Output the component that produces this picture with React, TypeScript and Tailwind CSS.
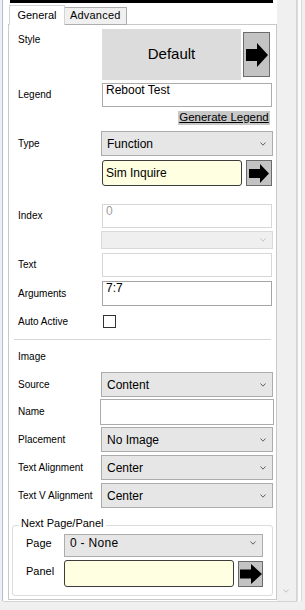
import React from "react";

function Arrow({ w, h, shaft, head }: { w: number; h: number; shaft: number; head: number }) {
  const t = (h - shaft) / 2;
  return (
    <svg width={w} height={h} viewBox={`0 0 ${w} ${h}`} className="block">
      <polygon
        points={`0,${t} ${head},${t} ${head},0 ${w},${h / 2} ${head},${h} ${head},${h - t} 0,${h - t}`}
        fill="#000"
      />
    </svg>
  );
}

function Chevron({ color = "#5f5f5f" }: { color?: string }) {
  return (
    <svg width="6" height="4" viewBox="0 0 6 4" className="block">
      <path d="M0.5 0.5 L3 3.2 L5.5 0.5" fill="none" stroke={color} strokeWidth="1" />
    </svg>
  );
}

function Label({ children, className = "" }: { children: React.ReactNode; className?: string }) {
  return <div className={"shrink-0 text-[10px] leading-[12px] text-black " + className}>{children}</div>;
}

function Dropdown({ text, className = "" }: { text: string; className?: string }) {
  return (
    <div
      className={
        "flex items-center justify-between border border-[#acacac] bg-[#e6e6e6] pl-[5px] pr-[6px] text-[12px] leading-[14px] text-black " +
        className
      }
    >
      <span>{text}</span>
      <Chevron />
    </div>
  );
}

export default function App() {
  return (
    <div className="flex h-[610px] w-[305px] bg-[#f0f0f0] font-['Liberation_Sans',Arial,sans-serif]">
      <div className="w-[2px] shrink-0" />
      <div className="h-[601px] w-[1px] shrink-0 bg-[#a9c0dc]" />
      <div className="flex h-[602px] w-[294px] shrink-0 flex-col border-b border-[#d4d4d4]">
        <div className="flex flex-1">
          {/* white client area */}
          <div className="flex w-[274px] shrink-0 flex-col bg-white pl-[5px]">
            <div className="ml-[2px] h-[3px] w-[263px] bg-black" />
            <div className="h-[2px]" />
            {/* tab strip */}
            <div className="flex h-[20px] items-end">
              <div className="h-[1px] w-[1px] bg-[#c9c9c9]" />
              <div className="flex h-[20px] w-[56px] items-start justify-center border-l border-r border-t border-[#d4d4d4] bg-white pt-[3px] text-[11px] leading-[13px] text-black">
                General
              </div>
              <div className="h-[18px] w-[62px] border-b border-r border-t border-[#adadad] bg-[#f0f0f0] pl-[5px] pt-[1px] text-[11px] leading-[13px] tracking-[0.2px] text-black">
                Advanced
              </div>
              <div className="h-[1px] flex-1 bg-[#c9c9c9]" />
            </div>
            {/* tab page */}
            <div className="flex h-[575px] w-[269px] flex-col border-b border-l border-r border-[#c9c9c9] pl-[9px]">
              {/* Style */}
              <div className="mt-[4px] flex h-[51px]">
                <Label className="w-[84px] pt-[5px]">Style</Label>
                <div className="flex h-[51px] w-[139px] items-center justify-center bg-[#dcdcdc] text-[15px] text-black">
                  Default
                </div>
                <div className="ml-[2px] flex h-[45px] w-[27px] items-center justify-center self-center border border-[#6b6b6b] bg-[#c3c3c3]">
                  <Arrow w={22} h={24} shaft={12} head={11} />
                </div>
              </div>
              {/* Legend */}
              <div className="mt-[3px] flex h-[24px] items-center">
                <Label className="w-[84px]">Legend</Label>
                <div className="h-[24px] w-[170px] border border-[#ababab] bg-white pl-[3px] text-[12px] leading-[13px] text-black">
                  Reboot Test
                </div>
              </div>
              {/* Generate legend */}
              <div className="mt-[4px] flex h-[14px]">
                <div className="ml-[160px] w-[92px] bg-[#c8c8c8] text-center text-[11.5px] leading-[13px] text-black underline">
                  Generate Legend
                </div>
              </div>
              {/* Type */}
              <div className="mt-[6px] flex h-[25px] items-center">
                <Label className="w-[83px]">Type</Label>
                <Dropdown text="Function" className="h-[25px] w-[172px]" />
              </div>
              {/* Sim Inquire */}
              <div className="mt-[4px] flex h-[26px]">
                <div className="w-[84px] shrink-0" />
                <div className="flex h-[26px] w-[140px] items-center rounded-[3px] border border-[#3c3c3c] bg-[#ffffe1] pl-[3px] text-[12px] leading-[14px] text-black">
                  Sim Inquire
                </div>
                <div className="ml-[4px] flex h-[26px] w-[26px] items-center justify-center border border-[#6b6b6b] bg-[#c3c3c3]">
                  <Arrow w={20} h={19} shaft={9} head={11} />
                </div>
              </div>
              {/* Index */}
              <div className="mt-[18px] flex h-[24px] items-center">
                <Label className="w-[84px]">Index</Label>
                <div className="h-[24px] w-[170px] border border-[#d6d6d6] bg-white pl-[3px] text-[12px] leading-[13px] text-[#a0a0a0]">
                  0
                </div>
              </div>
              {/* disabled dropdown */}
              <div className="mt-[3px] flex h-[18px]">
                <div className="w-[83px] shrink-0" />
                <div className="flex h-[18px] w-[172px] items-center justify-end border border-[#d9d9d9] bg-[#efefef] pr-[6px]">
                  <Chevron color="#c4c4c4" />
                </div>
              </div>
              {/* Text */}
              <div className="mt-[4px] flex h-[24px] items-center">
                <Label className="w-[84px]">Text</Label>
                <div className="h-[24px] w-[170px] border border-[#d6d6d6] bg-white" />
              </div>
              {/* Arguments */}
              <div className="mt-[4px] flex h-[25px] items-center">
                <Label className="w-[84px]">Arguments</Label>
                <div className="h-[25px] w-[170px] border border-[#a5a5a5] bg-white pl-[3px] text-[12px] leading-[13px] text-black">
                  7:7
                </div>
              </div>
              {/* Auto Active */}
              <div className="mt-[9px] flex h-[13px] items-center">
                <Label className="w-[85px]">Auto Active</Label>
                <div className="h-[13px] w-[13px] border border-[#333333] bg-white" />
              </div>
              {/* separator */}
              <div className="-ml-[4px] mt-[11px] h-[1px] w-[257px] bg-[#d6d6d6]" />
              {/* Image */}
              <div className="mt-[11px] flex h-[12px]">
                <Label>Image</Label>
              </div>
              {/* Source */}
              <div className="mt-[9px] flex h-[25px] items-center">
                <Label className="w-[83px]">Source</Label>
                <Dropdown text="Content" className="h-[25px] w-[172px]" />
              </div>
              {/* Name */}
              <div className="mt-[2px] flex h-[26px] items-center">
                <Label className="w-[82px]">Name</Label>
                <div className="h-[26px] w-[174px] border border-[#ababab] bg-white" />
              </div>
              {/* Placement */}
              <div className="mt-[2px] flex h-[25px] items-center">
                <Label className="w-[83px]">Placement</Label>
                <Dropdown text="No Image" className="h-[25px] w-[172px]" />
              </div>
              {/* Text Alignment */}
              <div className="mt-[3px] flex h-[25px] items-center">
                <Label className="w-[83px]">Text Alignment</Label>
                <Dropdown text="Center" className="h-[25px] w-[172px]" />
              </div>
              {/* Text V Alignment */}
              <div className="mt-[3px] flex h-[25px] items-center">
                <Label className="w-[83px]">Text V Alignment</Label>
                <Dropdown text="Center" className="h-[25px] w-[172px]" />
              </div>
              {/* Group box */}
              <div className="-ml-[6px] mt-[17px] flex h-[71px] w-[261px] flex-col rounded-[3px] border border-[#dcdcdc] pl-[13px]">
                <div className="-ml-[7px] -mt-[9px] w-fit bg-white px-[2px] text-[11px] leading-[13px] text-black">
                  Next Page/Panel
                </div>
                <div className="mt-[4px] flex h-[23px]">
                  <div className="w-[38px] shrink-0 pt-[3px] text-[11px] leading-[13px] text-black">Page</div>
                  <div className="flex h-[23px] w-[199px] items-center justify-between border border-[#acacac] bg-[#e6e6e6] pb-[6px] pl-[5px] pr-[6px] text-[12px] leading-[14px] tracking-[0.3px] text-black">
                    <span>0 - None</span>
                    <Chevron />
                  </div>
                </div>
                <div className="mt-[3px] flex h-[27px]">
                  <div className="w-[38px] shrink-0 pt-[5px] text-[11px] leading-[13px] text-black">Panel</div>
                  <div className="h-[27px] w-[170px] rounded-[3px] border border-[#3c3c3c] bg-[#ffffe1]" />
                  <div className="ml-[4px] mt-[1px] flex h-[26px] w-[25px] items-center justify-center border border-[#6b6b6b] bg-[#c3c3c3]">
                    <Arrow w={22} h={20} shaft={9} head={11} />
                  </div>
                </div>
              </div>
            </div>
            <div className="h-[1px]" />
          </div>
          {/* scrollbar */}
          <div className="flex w-[19px] shrink-0 flex-col items-center justify-end bg-[#f0f0f0] pb-[8px] pr-[1px]">
            <Chevron color="#c4c4c4" />
          </div>
          <div className="w-[1px] shrink-0 bg-[#d4d4d4]" />
        </div>
      </div>
      <div className="h-[601px] w-[1px] shrink-0 bg-[#dcdcdc]" />
      <div className="h-[601px] w-[3px] shrink-0 bg-[#fbfbfb]" />
      <div className="h-[601px] w-[1px] shrink-0 bg-[#dadada]" />
    </div>
  );
}
